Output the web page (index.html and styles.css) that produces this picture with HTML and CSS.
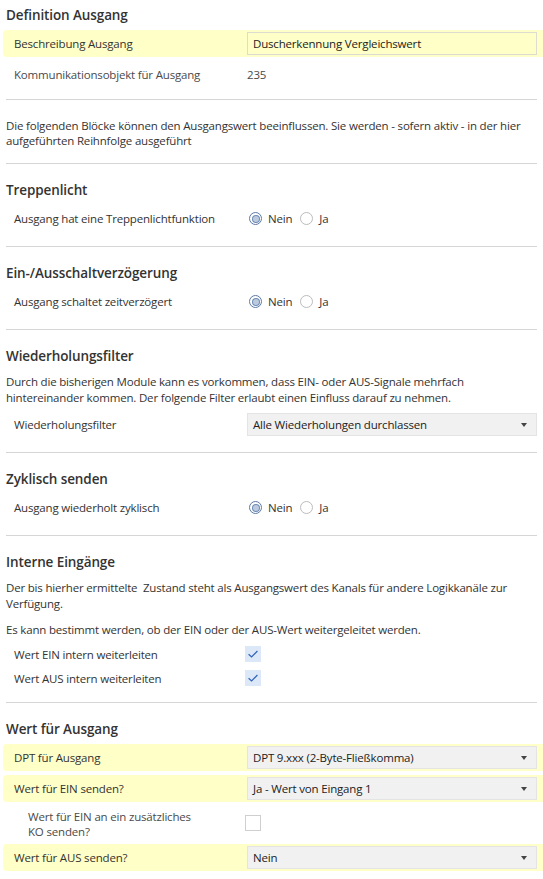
FILE: index.html
```html
<!DOCTYPE html>
<html lang="de">
<head>
<meta charset="utf-8">
<title>Definition Ausgang</title>
<link rel="stylesheet" href="styles.css">
</head>
<body>
<div class="page">

  <section class="section first">
    <h2 class="heading">Definition Ausgang</h2>
    <div class="rows">
      <div class="row hl">
        <div class="label">Beschreibung Ausgang</div>
        <div class="value"><div class="input">Duscherkennung Vergleichswert</div></div>
      </div>
      <div class="row">
        <div class="label muted">Kommunikationsobjekt für Ausgang</div>
        <div class="value muted text">235</div>
      </div>
    </div>
  </section>

  <section class="section para-only">
    <p class="para">Die folgenden Blöcke können den Ausgangswert beeinflussen. Sie werden - sofern aktiv - in der hier<br>aufgeführten Reihnfolge ausgeführt</p>
  </section>

  <section class="section">
    <h2 class="heading">Treppenlicht</h2>
    <div class="rows">
      <div class="row">
        <div class="label">Ausgang hat eine Treppenlichtfunktion</div>
        <div class="value radios">
          <span class="radio on"></span><span class="opt">Nein</span>
          <span class="radio"></span><span class="opt">Ja</span>
        </div>
      </div>
    </div>
  </section>

  <section class="section">
    <h2 class="heading">Ein-/Ausschaltverzögerung</h2>
    <div class="rows">
      <div class="row">
        <div class="label">Ausgang schaltet zeitverzögert</div>
        <div class="value radios">
          <span class="radio on"></span><span class="opt">Nein</span>
          <span class="radio"></span><span class="opt">Ja</span>
        </div>
      </div>
    </div>
  </section>

  <section class="section">
    <h2 class="heading">Wiederholungsfilter</h2>
    <p class="para before-row">Durch die bisherigen Module kann es vorkommen, dass EIN- oder AUS-Signale mehrfach<br>hintereinander kommen. Der folgende Filter erlaubt einen Einfluss darauf zu nehmen.</p>
    <div class="rows">
      <div class="row">
        <div class="label">Wiederholungsfilter</div>
        <div class="value"><div class="select">Alle Wiederholungen durchlassen<span class="caret"></span></div></div>
      </div>
    </div>
  </section>

  <section class="section">
    <h2 class="heading">Zyklisch senden</h2>
    <div class="rows">
      <div class="row">
        <div class="label">Ausgang wiederholt zyklisch</div>
        <div class="value radios">
          <span class="radio on"></span><span class="opt">Nein</span>
          <span class="radio"></span><span class="opt">Ja</span>
        </div>
      </div>
    </div>
  </section>

  <section class="section">
    <h2 class="heading">Interne Eingänge</h2>
    <p class="para">Der bis hierher ermittelte&nbsp; Zustand steht als Ausgangswert des Kanals für andere Logikkanäle zur<br>Verfügung.</p>
    <p class="para second">Es kann bestimmt werden, ob der EIN oder der AUS-Wert weitergeleitet werden.</p>
    <div class="rows checks">
      <div class="row short">
        <div class="label">Wert EIN intern weiterleiten</div>
        <div class="value"><span class="check on"><svg viewBox="0 0 16 16" width="16" height="16"><path d="M3.6 8.2 L6.6 11 L12.4 5" fill="none" stroke="#2f63b8" stroke-width="1.2"/></svg></span></div>
      </div>
      <div class="row short">
        <div class="label">Wert AUS intern weiterleiten</div>
        <div class="value"><span class="check on"><svg viewBox="0 0 16 16" width="16" height="16"><path d="M3.6 8.2 L6.6 11 L12.4 5" fill="none" stroke="#2f63b8" stroke-width="1.2"/></svg></span></div>
      </div>
    </div>
  </section>

  <section class="section last">
    <h2 class="heading">Wert für Ausgang</h2>
    <div class="rows">
      <div class="row hl">
        <div class="label">DPT für Ausgang</div>
        <div class="value"><div class="select">DPT 9.xxx (2-Byte-Fließkomma)<span class="caret"></span></div></div>
      </div>
      <div class="row hl">
        <div class="label">Wert für EIN senden?</div>
        <div class="value"><div class="select">Ja - Wert von Eingang 1<span class="caret"></span></div></div>
      </div>
      <div class="row tall">
        <div class="label sub muted">Wert für EIN an ein zusätzliches<br>KO senden?</div>
        <div class="value"><span class="check off"></span></div>
      </div>
      <div class="row hl">
        <div class="label">Wert für AUS senden?</div>
        <div class="value"><div class="select">Nein<span class="caret"></span></div></div>
      </div>
    </div>
  </section>

</div>
</body>
</html>
```

FILE: styles.css
```css
* { box-sizing: border-box; }

html, body {
  margin: 0;
  padding: 0;
  background: #ffffff;
}

body {
  font-family: "Open Sans", "Noto Sans", "Liberation Sans", sans-serif;
  font-size: 11.5px;
  letter-spacing: -0.18px;
  color: #333333;
  width: 543px;
}

.page {
  padding: 0 6px;
}

.section {
  padding: 16px 0 14px;
  border-bottom: 1px solid #d6d6d6;
}

.section.first {
  padding-top: 5px;
  padding-bottom: 11px;
}

.section.para-only {
  padding-top: 18px;
  padding-bottom: 15px;
}

.section.last {
  border-bottom: none;
  padding-bottom: 8px;
}

.heading {
  margin: 0 0 5px;
  font-size: 13.5px;
  font-weight: 600;
  line-height: 20px;
  letter-spacing: -0.1px;
  color: #333333;
}

.para {
  margin: 8px 0 5px;
  line-height: 16px;
  color: #333333;
  white-space: nowrap;
}

.para.before-row {
  margin-bottom: 5px;
}

.para-only .para {
  margin: 0;
  line-height: 15px;
}

.para.second {
  margin-top: 10px;
  margin-bottom: 6px;
}

.rows {
  display: flex;
  flex-direction: column;
  gap: 4px;
}

.row {
  display: flex;
  align-items: center;
  height: 27px;
  padding-left: 8px;
}

.row.short {
  height: 20px;
}

.row.tall {
  height: 34px;
}

.row.hl {
  background: #ffffc8;
  margin-left: -3px;
  margin-right: -6px;
  padding-left: 11px;
  padding-right: 6px;
  border-radius: 4px 0 0 4px;
}

.label {
  width: 233px;
  flex: none;
  line-height: 15px;
}

.label.sub {
  padding-left: 14px;
  padding-top: 1px;
}

.muted {
  color: #4a4a4a;
}

.value {
  flex: 1;
  display: flex;
  align-items: center;
  min-width: 0;
}

.input {
  width: 100%;
  height: 23px;
  border: 1px solid #dcdcd0;
  padding: 0 5px;
  line-height: 21px;
  color: #222222;
}

.select {
  position: relative;
  width: 100%;
  height: 23px;
  background: #f1f1f1;
  border: 1px solid #e4e4e4;
  padding: 0 5px;
  line-height: 21px;
  color: #222222;
}

.caret {
  position: absolute;
  right: 9px;
  top: 9px;
  width: 0;
  height: 0;
  border-left: 3.5px solid transparent;
  border-right: 3.5px solid transparent;
  border-top: 4px solid #444444;
}

.radios {
  padding-left: 2px;
}

.radio {
  width: 13px;
  height: 13px;
  border-radius: 50%;
  border: 1px solid #bcbcbc;
  background: #ffffff;
  flex: none;
  position: relative;
}

.radio.on {
  border-color: #5b7aa6;
}

.radio.on::after {
  content: "";
  position: absolute;
  left: 2.5px;
  top: 2.5px;
  width: 6px;
  height: 6px;
  border-radius: 50%;
  background: #bccadd;
  box-shadow: 0 0 0 1px #6f8cb6;
}

.opt {
  margin-left: 6px;
  margin-right: 8px;
  color: #333333;
}

.check {
  width: 16px;
  height: 16px;
  display: block;
  margin-left: -2px;
}

.check svg {
  display: block;
}

.check.on {
  background: #dce7f8;
}

.check.off {
  border: 1px solid #cfcfcf;
  background: #ffffff;
}
```
